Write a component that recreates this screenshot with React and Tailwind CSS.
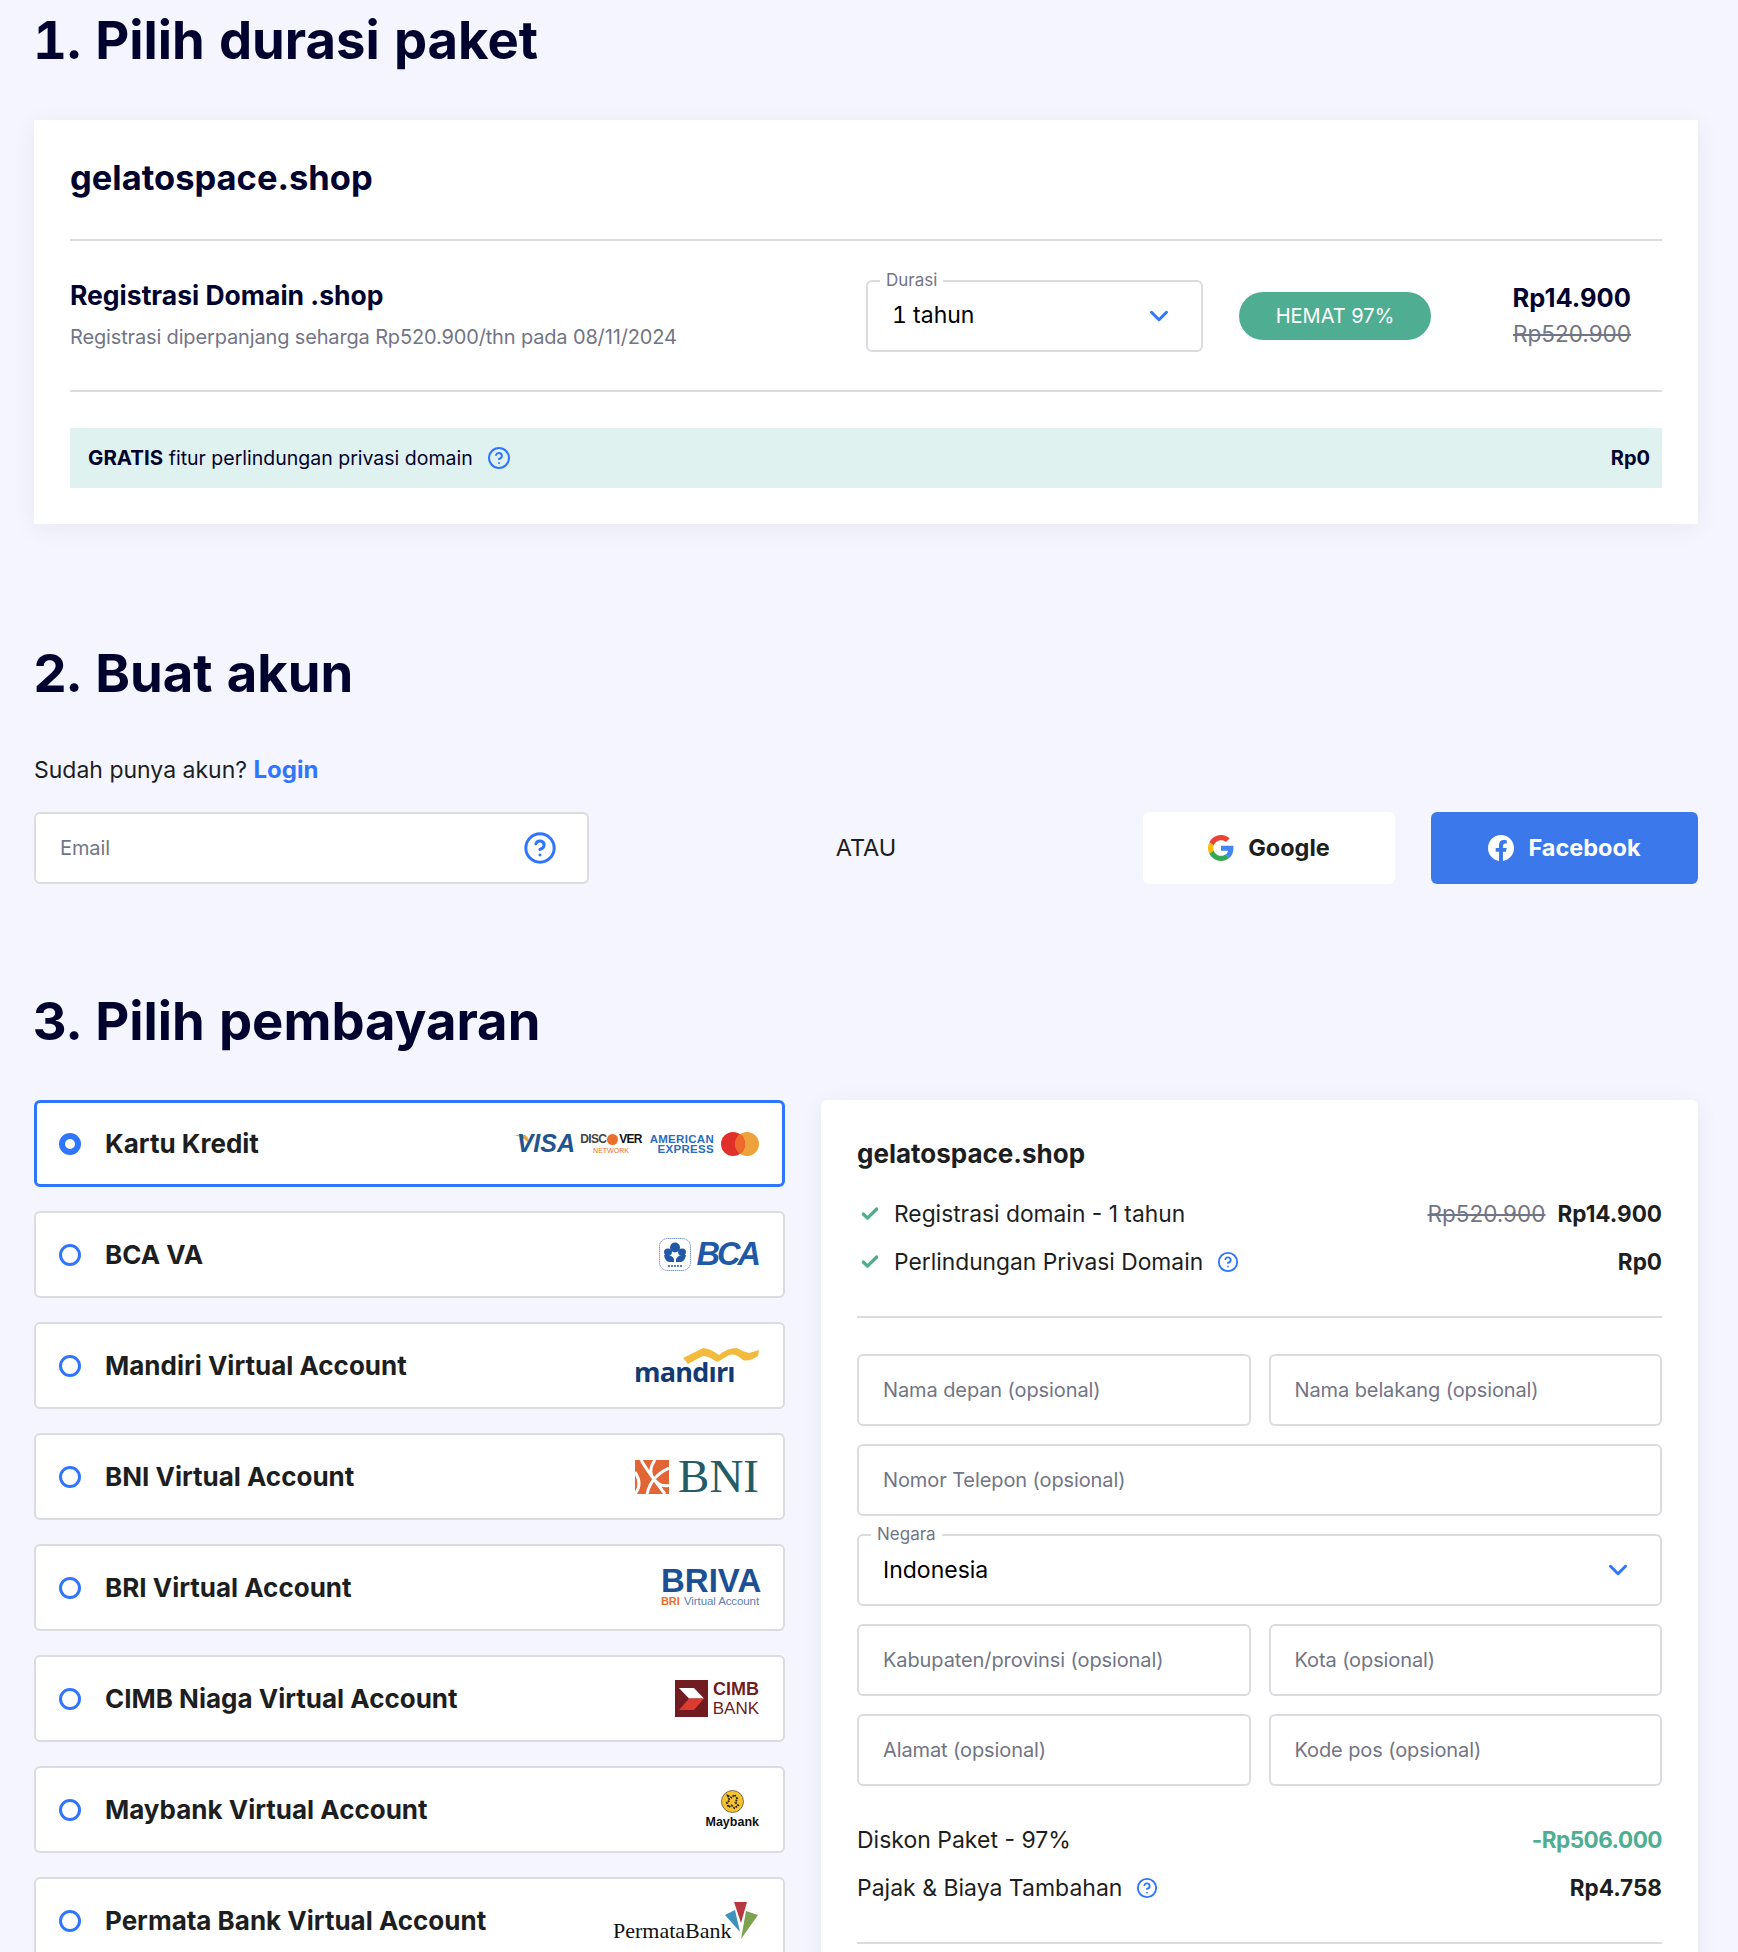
import { ChevronDown, CircleHelp, Check } from 'lucide-react';

const Heading = ({ children, className = '' }) => (
  <h2 className={`-ml-[1px] text-[52.600px] leading-[64px] font-bold tabular-nums text-[#02022f] ${className}`}>{children}</h2>
);

const Help = ({ size = 22, stroke = 2 }) => <CircleHelp size={size} strokeWidth={stroke} className="text-[#2f75ff] shrink-0" />;

const TextInput = ({ placeholder, className = '' }) => (
  <input
    placeholder={placeholder}
    className={`h-[72px] w-full min-w-0 rounded-md border-2 border-[#dadce0] bg-white px-[24px] text-[20px] tracking-[-0.1px] outline-none placeholder:text-[#727586] ${className}`}
  />
);

const SelectBox = ({ label, value, className = '' }) => (
  <div className={`relative flex h-[72px] items-center justify-between rounded-md border-2 border-[#dadce0] bg-white pl-[24px] pr-[27px] text-[23px] tabular-nums text-black ${className}`}>
    <span className="absolute -top-[12px] left-[12px] bg-white px-[6px] text-[17px] leading-[20px] text-[#727586]">{label}</span>
    <span>{value}</span>
    <ChevronDown size={30} strokeWidth={2.4} className="text-[#2f75ff]" />
  </div>
);

const VisaLogo = () => (
  <div className="flex items-center font-['Liberation_Sans',sans-serif]">
    <div className="relative w-[60px]">
      <svg width="20" height="12" viewBox="0 0 20 12" className="absolute -left-[1px] top-[4px]">
        <path d="M0 0H11Q14 1 15 8Q9 2 0 0z" fill="#e8a63c" />
      </svg>
      <span className="relative block text-right text-[25px] leading-none font-bold italic text-[#1f5591]">VISA</span>
    </div>
    <div className="ml-[7px] flex w-[58px] flex-col items-center leading-none">
      <span className="flex items-center text-[12px] leading-[13px] font-bold tracking-[-0.7px] text-[#444]">
        DISC
        <span className="mx-[1px] inline-block h-[11px] w-[11px] rounded-full bg-[#e9702b]" />
        <span className="text-[#111]">VER</span>
      </span>
      <span className="mt-[1px] text-[7px] leading-[7px] text-[#e9702b]">NETWORK</span>
    </div>
    <div className="ml-[9px] flex w-[65px] flex-col items-end text-[11.500px] leading-[10px] font-bold tracking-[0.3px] text-[#2a6cc0]">
      <span>AMERICAN</span>
      <span>EXPRESS</span>
    </div>
    <svg width="38" height="24" viewBox="0 0 38 24" className="ml-[7px]">
      <circle cx="26" cy="12" r="12" fill="#eda23c" />
      <circle cx="12" cy="12" r="12" fill="#e1302a" />
      <path d="M19 2.100a12 12 0 0 1 0 19.800a12 12 0 0 1 0-19.800z" fill="#f0692c" />
    </svg>
  </div>
);

const BcaLogo = () => (
  <div className="flex items-center gap-[6px]">
    <svg width="32" height="33" viewBox="0 0 32 33">
      <rect x="0.500" y="0.500" width="31" height="32" rx="8" fill="none" stroke="#2159a6" strokeWidth="0.6" strokeDasharray="1.500 0.500" />
      <circle cx="16" cy="9.500" r="5" fill="#2159a6" />
      <ellipse cx="9" cy="14" rx="4" ry="3.500" fill="#2159a6" />
      <ellipse cx="23" cy="14" rx="4" ry="3.500" fill="#2159a6" />
      <path d="M5 17Q12 16 15 21V24H10Q6 23 5 17zM27 17Q20 16 17 21V24H22Q26 23 27 17z" fill="#2159a6" />
      <path d="M9 28H23" stroke="#2159a6" strokeWidth="1.500" strokeDasharray="2 1" />
    </svg>
    <span className="pr-[1px] text-[32.500px] leading-none font-bold italic tracking-[-3px] text-[#2159a6] font-['Liberation_Sans',sans-serif]">BCA</span>
  </div>
);

const MandiriLogo = () => (
  <div className="relative h-[38px] w-[124px]">
    <svg width="76" height="18" viewBox="0 0 76 18" className="absolute right-0 top-0">
      <path d="M0 11L20 1Q28 2 36 8Q44 1 54 1Q60 5 66 6L76 3L75 9Q66 15 60 13Q52 6 46 8Q40 12 34 15Q26 9 20 9Q12 13 5 17z" fill="#f3bb3c" />
    </svg>
    <span className="absolute bottom-[-5px] -left-[1px] text-[27px] leading-[37px] font-bold tracking-[-0.8px] text-[#133a72] font-['Open_Sans',sans-serif]">mandırı</span>
  </div>
);

const BniLogo = () => (
  <div className="flex items-center gap-[9px]">
    <svg width="34" height="34" viewBox="0 0 34 34">
      <rect width="34" height="34" fill="#e26535" />
      <path d="M6 0Q13 12 30 34M0 12Q8 24 0 34M12 34Q16 16 34 8M20 0Q10 14 24 24 30 27 34 25" fill="none" stroke="#fff" strokeWidth="3" />
    </svg>
    <span className="text-[47px] leading-none text-[#235c65] font-['Liberation_Serif',serif]">BNI</span>
  </div>
);

const BriLogo = () => (
  <div className="flex w-[98px] flex-col leading-none font-['Liberation_Sans',sans-serif]">
    <span className="text-right text-[33px] leading-[26px] font-bold text-[#1d4f96]">BRIVA</span>
    <span className="mt-[2px] flex justify-between text-[11.500px] leading-[11px] tracking-[-0.1px] text-[#5d7fb0]">
      <span className="text-[11px] font-bold text-[#e9702b]">BRI</span>
      <span>Virtual Account</span>
    </span>
  </div>
);

const CimbLogo = () => (
  <div className="flex items-center gap-[5px]">
    <svg width="33" height="37" viewBox="0 0 33 37">
      <rect width="33" height="37" fill="#701c20" />
      <path d="M4 8H19L29 18.500H14z" fill="#fff" />
      <path d="M14 18.500H29L19 30H4z" fill="#dc3b30" />
    </svg>
    <div className="flex flex-col items-end leading-[19px] text-[#701c20] font-['Liberation_Sans',sans-serif]">
      <span className="text-[18px] font-bold">CIMB</span>
      <span className="text-[17px]">BANK</span>
    </div>
  </div>
);

const MaybankLogo = () => (
  <div className="flex flex-col items-center leading-none">
    <svg width="23" height="23" viewBox="0 0 24 24">
      <circle cx="12" cy="12" r="11.500" fill="#f5c330" stroke="#222" strokeWidth="0.6" />
      <path d="M7 6l4 2 3-3 3 4-2 4 3 3-4 3-3-3-3 2-2-5 3-2z" fill="none" stroke="#2b2412" strokeWidth="1.800" strokeDasharray="2 1" />
    </svg>
    <span className="mt-[2px] text-[12.500px] leading-[14px] font-bold text-[#111] font-['Liberation_Sans',sans-serif]">Maybank</span>
  </div>
);

const PermataLogo = () => (
  <div className="relative h-[38px] w-[146px]">
    <span className="absolute bottom-[-2px] left-0 text-[22px] leading-none text-[#111] font-['Liberation_Serif',serif]">PermataBank</span>
    <svg width="34" height="38" viewBox="0 0 34 38" className="absolute right-0 top-0">
      <path d="M9 0H22L16 21z" fill="#b8383f" />
      <path d="M0 13L10 8 15 30z" fill="#3f93ba" />
      <path d="M21 9L33 13 16 37z" fill="#7aa24f" />
    </svg>
  </div>
);

const paymentMethods = [
  { name: 'Kartu Kredit', logo: <VisaLogo />, active: true },
  { name: 'BCA VA', logo: <BcaLogo /> },
  { name: 'Mandiri Virtual Account', logo: <MandiriLogo /> },
  { name: 'BNI Virtual Account', logo: <BniLogo /> },
  { name: 'BRI Virtual Account', logo: <BriLogo /> },
  { name: 'CIMB Niaga Virtual Account', logo: <CimbLogo /> },
  { name: 'Maybank Virtual Account', logo: <MaybankLogo /> },
  { name: 'Permata Bank Virtual Account', logo: <PermataLogo /> },
];

const PaymentRow = ({ name, logo, active }) => (
  <div className={`flex h-[87px] shrink-0 items-center justify-between rounded-md bg-white ${active ? 'border-[3px] border-[#2f75ff] pl-[22px] pr-[23px]' : 'border-2 border-[#dadce0] pl-[23px] pr-[24px]'}`}>
    <div className="flex items-center gap-[24px]">
      <span className={`h-[22px] w-[22px] rounded-full border-[#2f75ff] ${active ? 'border-[6px]' : 'border-[3px]'}`} />
      <span className="text-[26px] font-bold text-[#1d1e20]">{name}</span>
    </div>
    {logo}
  </div>
);

const OrderLine = ({ children, right }) => (
  <div className="flex h-[48px] items-center justify-between text-[22.800px] text-[#1d1e20]">
    <div className="flex items-center">
      <Check size={20} strokeWidth={4} className="mr-[14px] ml-[3px] text-[#4fae91]" />
      {children}
    </div>
    {right}
  </div>
);

const App = () => {
  return (
    <div className="h-[1952px] overflow-hidden bg-[#f4f5ff] pl-[34px] pr-[40px] font-['Inter',sans-serif]">
      <Heading className="pt-[8px]">1. Pilih durasi paket</Heading>

      <section className="mt-[48px] h-[404px] bg-white px-[36px] pt-[30px] shadow-[0_4px_24px_rgba(29,30,32,0.06)]">
        <h3 className="text-[34.500px] leading-[56px] font-bold text-[#02022f]">gelatospace.shop</h3>
        <div className="mt-[33px] flex h-[153px] items-center border-y-2 border-[#dadce0]">
          <div className="flex-1">
            <div className="-mt-[3px] text-[26.500px] leading-[36px] font-bold text-[#02022f]">Registrasi Domain .shop</div>
            <div className="mt-[9px] text-[20px] leading-[30px] tracking-[-0.15px] text-[#727586]">Registrasi diperpanjang seharga Rp520.900/thn pada 08/11/2024</div>
          </div>
          <SelectBox label="Durasi" value="1 tahun" className="w-[337px]" />
          <div className="ml-[36px] flex h-[48px] w-[192px] items-center justify-center rounded-full bg-[#4fae91] text-[20px] text-white">HEMAT 97%</div>
          <div className="ml-[70px] mr-[31px] w-[130px] text-right">
            <div className="text-[25.500px] leading-[36px] font-bold text-[#02022f]">Rp14.900</div>
            <div className="text-[22.500px] leading-[36px] text-[#727586] line-through">Rp520.900</div>
          </div>
        </div>
        <div className="mt-[36px] flex h-[60px] items-center justify-between bg-[#e0f2ef] pl-[18px] pr-[12px] text-[19.500px] text-[#02022f]">
          <div className="flex items-center">
            <span><b className="text-[20.500px] font-bold">GRATIS</b> fitur perlindungan privasi domain</span>
            <span className="ml-[14px]"><Help size={24} /></span>
          </div>
          <b className="text-[20px] font-bold">Rp0</b>
        </div>
      </section>

      <Heading className="mt-[117px]">2. Buat akun</Heading>
      <p className="mt-[47px] text-[23px] leading-[36px] text-[#1d1e20]">
        Sudah punya akun? <a className="text-[24px] font-bold text-[#2f75ff]">Login</a>
      </p>
      <div className="mt-[24px] flex h-[72px] items-center">
        <div className="relative w-[555px]">
          <TextInput placeholder="Email" className="pr-[70px]" />
          <span className="absolute right-[32px] top-[19px]"><Help size={34} stroke={2.1} /></span>
        </div>
        <div className="flex-1 text-center text-[23.500px] text-[#1d1e20]">ATAU</div>
        <button className="flex h-[72px] w-[252px] items-center justify-center gap-[14px] rounded-md bg-white text-[23.500px] font-bold text-[#1d1e20]">
          <svg width="26" height="26" viewBox="0 0 48 48">
            <path fill="#EA4335" d="M24 9.500c3.500 0 6.700 1.200 9.200 3.600l6.900-6.900C35.900 2.400 30.500 0 24 0 14.600 0 6.500 5.400 2.600 13.200l8 6.200C12.400 13.700 17.700 9.500 24 9.500z" />
            <path fill="#4285F4" d="M47 24.500c0-1.600-.1-3.100-.4-4.500H24v9h12.900c-.6 3-2.200 5.500-4.800 7.200l7.700 6C44.300 38 47 31.800 47 24.500z" />
            <path fill="#FBBC05" d="M10.600 28.600c-.5-1.400-.8-3-.8-4.600s.3-3.200.8-4.600l-8-6.200C.9 16.500 0 20.100 0 24s.9 7.500 2.600 10.800l8-6.200z" />
            <path fill="#34A853" d="M24 48c6.500 0 11.900-2.100 15.900-5.800l-7.700-6c-2.100 1.400-4.900 2.300-8.200 2.300-6.300 0-11.600-4.200-13.400-9.900l-8 6.200C6.500 42.600 14.600 48 24 48z" />
          </svg>
          Google
        </button>
        <button className="ml-[36px] flex h-[72px] w-[267px] items-center justify-center gap-[14px] rounded-md bg-[#3b78ec] text-[23.500px] font-bold text-white">
          <svg width="26" height="26" viewBox="0 0 24 24" fill="#fff">
            <path d="M24 12.070C24 5.400 18.630 0 12 0S0 5.400 0 12.070c0 6.030 4.390 11.020 10.130 11.930v-8.440H7.080v-3.490h3.050V9.410c0-3.020 1.790-4.690 4.530-4.690 1.310 0 2.680.24 2.680.24v2.970h-1.510c-1.490 0-1.960.93-1.960 1.880v2.260h3.330l-.53 3.490h-2.800V24C19.610 23.090 24 18.100 24 12.070z" />
          </svg>
          Facebook
        </button>
      </div>

      <Heading className="mt-[105px]">3. Pilih pembayaran</Heading>
      <div className="mt-[47px] flex items-start gap-[36px]">
        <div className="flex w-[751px] shrink-0 flex-col gap-[24px]">
          {paymentMethods.map((method) => (
            <PaymentRow key={method.name} {...method} />
          ))}
        </div>
        <section className="flex-1 rounded-md bg-white px-[36px] pt-[32px] shadow-[0_4px_24px_rgba(29,30,32,0.06)]">
          <h3 className="text-[26px] leading-[44px] font-bold text-[#1d1e20]">gelatospace.shop</h3>
          <div className="mt-[14px]">
            <OrderLine
              right={
                <span className="flex gap-[12px] text-[22.500px]">
                  <span className="text-[#727586] line-through">Rp520.900</span>
                  <b className="font-bold">Rp14.900</b>
                </span>
              }
            >
              Registrasi domain - 1 tahun
            </OrderLine>
            <OrderLine right={<b className="text-[22.500px] font-bold">Rp0</b>}>
              Perlindungan Privasi Domain
              <span className="ml-[14px]"><Help size={22} /></span>
            </OrderLine>
          </div>
          <div className="mt-[30px] border-t-2 border-[#dadce0] pt-[36px]">
            <div className="grid grid-cols-2 gap-x-[18px] gap-y-[18px]">
              <TextInput placeholder="Nama depan (opsional)" />
              <TextInput placeholder="Nama belakang (opsional)" />
              <TextInput placeholder="Nomor Telepon (opsional)" className="col-span-2" />
              <SelectBox label="Negara" value="Indonesia" className="col-span-2" />
              <TextInput placeholder="Kabupaten/provinsi (opsional)" />
              <TextInput placeholder="Kota (opsional)" />
              <TextInput placeholder="Alamat (opsional)" />
              <TextInput placeholder="Kode pos (opsional)" />
            </div>
          </div>
          <div className="mt-[30px] text-[23px] text-[#1d1e20]">
            <div className="flex h-[48px] items-center justify-between">
              <span>Diskon Paket - 97%</span>
              <b className="text-[22.500px] font-bold tracking-[-0.5px] text-[#4fae91]">-Rp506.000</b>
            </div>
            <div className="flex h-[48px] items-center justify-between">
              <span className="flex items-center">
                Pajak &amp; Biaya Tambahan
                <span className="ml-[14px]"><Help size={22} /></span>
              </span>
              <b className="text-[22.500px] font-bold">Rp4.758</b>
            </div>
          </div>
          <div className="mt-[30px] border-t-2 border-[#dadce0] pb-[40px]" />
        </section>
      </div>
    </div>
  );
};

export default App;
